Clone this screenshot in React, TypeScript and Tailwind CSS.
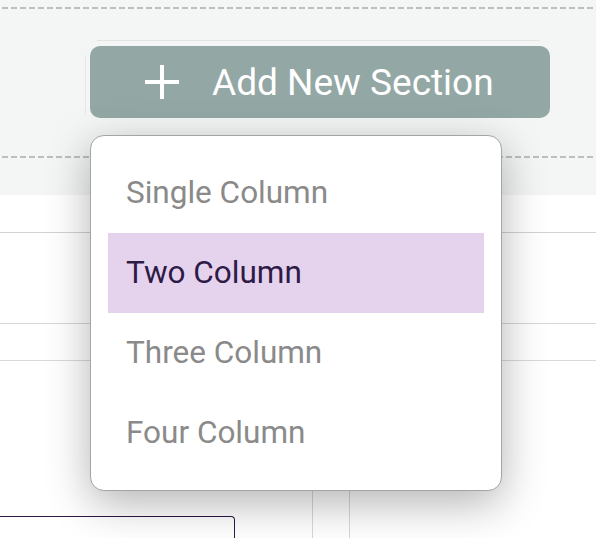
import React from "react";

const items = ["Single Column", "Two Column", "Three Column", "Four Column"];

function Dashed() {
  return (
    <div className="h-[2px] w-full bg-[linear-gradient(to_right,transparent_2px,#bdbebe_2px,#bdbebe_8px,transparent_8px)] bg-[length:9px_2px] bg-repeat-x" />
  );
}

export default function App() {
  return (
    <div
      className="relative w-[596px] h-[538px] overflow-hidden bg-white"
      style={{ fontFamily: "Roboto, 'Liberation Sans', sans-serif" }}
    >
      {/* top band */}
      <div className="h-[195px] bg-[#f4f5f5] pt-[7px] flex flex-col">
        <Dashed />
        <div className="mt-[31px] ml-[97px] w-[443px] h-px bg-[#e3e5e5]" />
        <div className="flex mt-[5px]">
          <div className="ml-[85px] mt-[9px] w-px h-[60px] bg-[#e6e8e8]" />
          <button className="ml-[4px] w-[460px] h-[72px] rounded-[10px] bg-[#93a7a5] flex items-center pl-[55px] gap-[33px] text-white">
            <svg width="34" height="34" viewBox="0 0 34 34" className="shrink-0">
              <rect x="15" y="0" width="4" height="34" fill="white" />
              <rect x="0" y="15" width="34" height="4" fill="white" />
            </svg>
            <span className="text-[37px] leading-none">Add New Section</span>
          </button>
        </div>
        <div className="mt-[38px]">
          <Dashed />
        </div>
      </div>

      {/* lower content */}
      <div className="flex flex-col">
        <div className="mt-[37px] h-px bg-[#d2d2d2]" />
        <div className="mt-[90px] h-px bg-[#d6d6d6]" />
        <div className="mt-[36px] h-px bg-[#dadada]" />
        <div className="flex h-[180px]">
          <div className="w-[235px] flex flex-col justify-end">
            <div className="h-[25px] w-[245px] -ml-[10px] border-t border-r border-[#2e1a47] rounded-tr-[4px]" />
          </div>
          <div className="ml-[77px] w-px bg-[#d8d8d8]" />
          <div className="ml-[36px] w-px bg-[#d8d8d8]" />
        </div>
      </div>

      {/* dropdown menu overlay */}
      <div className="absolute left-[90px] top-[135px] w-[412px] h-[356px] bg-white border border-[#a4a4a4] rounded-[14px] shadow-[0_12px_44px_rgba(0,0,0,0.3)] p-[17px] flex flex-col">
        {items.map((t, i) => (
          <div
            key={t}
            className={
              i === 1
                ? "h-[80px] flex items-center pl-[18px] bg-[#e5d3ee] text-[#2e1a47] text-[31.5px]"
                : "h-[80px] flex items-center pl-[18px] text-[#8a8a8a] text-[31.5px]"
            }
          >
            {t}
          </div>
        ))}
      </div>
    </div>
  );
}
